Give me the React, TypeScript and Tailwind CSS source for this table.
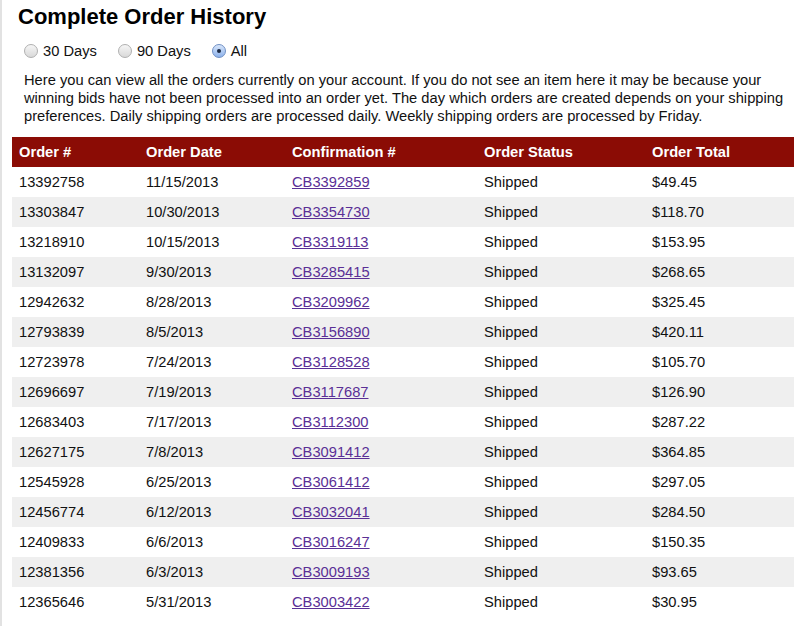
import React, { useState } from "react";

interface Order {
  id: string;
  date: string;
  confirmation: string;
  status: string;
  total: string;
}

const orders: Order[] = [
  { id: "13392758", date: "11/15/2013", confirmation: "CB3392859", status: "Shipped", total: "$49.45" },
  { id: "13303847", date: "10/30/2013", confirmation: "CB3354730", status: "Shipped", total: "$118.70" },
  { id: "13218910", date: "10/15/2013", confirmation: "CB3319113", status: "Shipped", total: "$153.95" },
  { id: "13132097", date: "9/30/2013", confirmation: "CB3285415", status: "Shipped", total: "$268.65" },
  { id: "12942632", date: "8/28/2013", confirmation: "CB3209962", status: "Shipped", total: "$325.45" },
  { id: "12793839", date: "8/5/2013", confirmation: "CB3156890", status: "Shipped", total: "$420.11" },
  { id: "12723978", date: "7/24/2013", confirmation: "CB3128528", status: "Shipped", total: "$105.70" },
  { id: "12696697", date: "7/19/2013", confirmation: "CB3117687", status: "Shipped", total: "$126.90" },
  { id: "12683403", date: "7/17/2013", confirmation: "CB3112300", status: "Shipped", total: "$287.22" },
  { id: "12627175", date: "7/8/2013", confirmation: "CB3091412", status: "Shipped", total: "$364.85" },
  { id: "12545928", date: "6/25/2013", confirmation: "CB3061412", status: "Shipped", total: "$297.05" },
  { id: "12456774", date: "6/12/2013", confirmation: "CB3032041", status: "Shipped", total: "$284.50" },
  { id: "12409833", date: "6/6/2013", confirmation: "CB3016247", status: "Shipped", total: "$150.35" },
  { id: "12381356", date: "6/3/2013", confirmation: "CB3009193", status: "Shipped", total: "$93.65" },
  { id: "12365646", date: "5/31/2013", confirmation: "CB3003422", status: "Shipped", total: "$30.95" },
];

const ranges = ["30 Days", "90 Days", "All"];

const Radio: React.FC<{ label: string; checked: boolean; onSelect: () => void }> = ({
  label,
  checked,
  onSelect,
}) => {
  return (
    <label className="flex items-center gap-[5px] cursor-pointer" onClick={onSelect}>
      <span
        className={`flex h-[14px] w-[14px] items-center justify-center rounded-full border ${
          checked
            ? "border-[#6f8fc4] bg-gradient-to-b from-[#d8e6fa] to-[#8db2eb]"
            : "border-[#b0b0b0] bg-gradient-to-b from-[#f6f6f6] to-[#d9d9d9]"
        }`}
      >
        {checked && <span className="h-[4px] w-[4px] rounded-full bg-[#1b2a44]" />}
      </span>
      <span>{label}</span>
    </label>
  );
};

const OrderHistory: React.FC = () => {
  const [range, setRange] = useState<string>("All");

  return (
    <div className="min-h-screen bg-white border-l-2 border-[#e2e2e2] font-['Liberation_Sans',Arial,sans-serif] text-[14.7px] text-[#111]">
      <div className="pl-[10px] pr-[4px] pt-[4px]">
        <h1 className="pl-[6px] text-[22px] leading-[26px] font-bold text-black">
          Complete Order History
        </h1>
        <div className="mt-[12px] flex gap-[21px] pl-[12px] leading-[18px]">
          {ranges.map((r) => (
            <Radio key={r} label={r} checked={range === r} onSelect={() => setRange(r)} />
          ))}
        </div>
        <p className="mt-[11px] pl-[12px] pr-[10px] leading-[18px]">
          Here you can view all the orders currently on your account. If you do not see an item
          here it may be because your winning bids have not been processed into an order yet. The
          day which orders are created depends on your shipping preferences. Daily shipping orders
          are processed daily. Weekly shipping orders are processed by Friday.
        </p>
        <table className="mt-[12px] w-[782px] table-fixed border-collapse">
          <colgroup>
            <col className="w-[127px]" />
            <col className="w-[146px]" />
            <col className="w-[192px]" />
            <col className="w-[168px]" />
            <col />
          </colgroup>
          <thead>
            <tr className="h-[30px] bg-[#8b0c05] text-left text-white">
              <th className="pl-[7px] font-bold">Order #</th>
              <th className="pl-[7px] font-bold">Order Date</th>
              <th className="pl-[7px] font-bold">Confirmation #</th>
              <th className="pl-[7px] font-bold">Order Status</th>
              <th className="pl-[7px] font-bold">Order Total</th>
            </tr>
          </thead>
          <tbody>
            {orders.map((o, i) => (
              <tr key={o.id} className={`h-[30px] ${i % 2 === 1 ? "bg-[#efefef]" : "bg-white"}`}>
                <td className="pl-[7px]">{o.id}</td>
                <td className="pl-[7px]">{o.date}</td>
                <td className="pl-[7px]">
                  <a href="#" className="text-[#5a2f96] underline">
                    {o.confirmation}
                  </a>
                </td>
                <td className="pl-[7px]">{o.status}</td>
                <td className="pl-[7px]">{o.total}</td>
              </tr>
            ))}
          </tbody>
        </table>
      </div>
    </div>
  );
};

export default OrderHistory;
